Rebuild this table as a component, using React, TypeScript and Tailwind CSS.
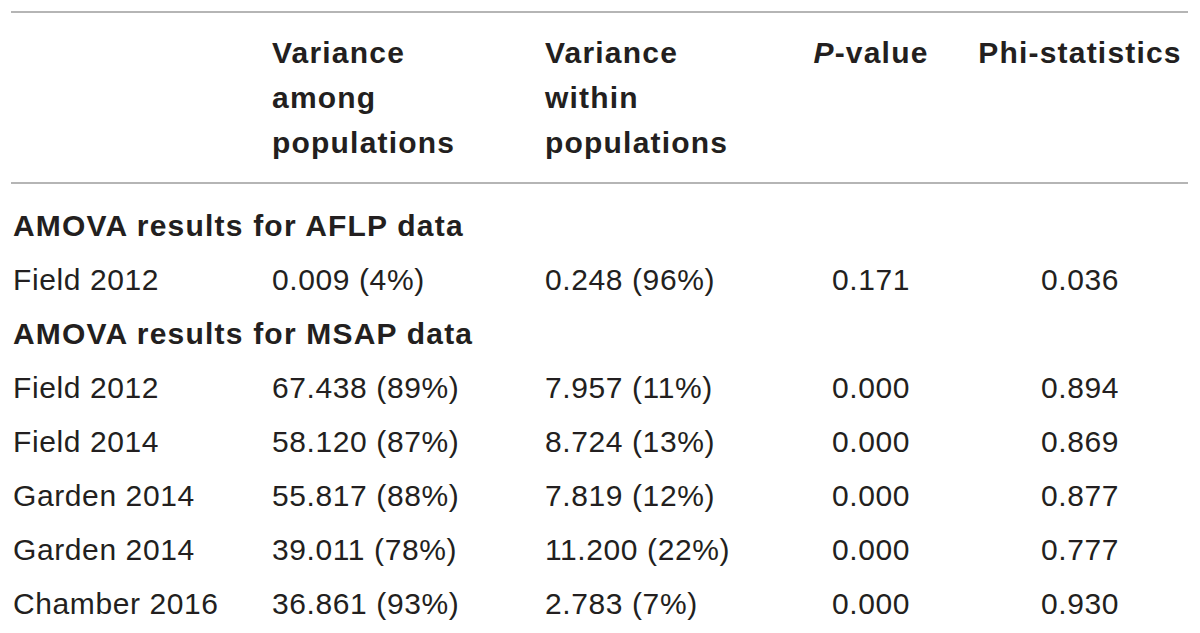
// AMOVA table — variance components for AFLP and MSAP data
const headCls = "pt-[17px] pb-[17px] align-top font-bold leading-[45px] tracking-[0.04em]";
const cellCls = "p-0 leading-[54px] whitespace-nowrap";

type Row = { label: string; among: string; within: string; p: string; phi: string };

const aflp: Row[] = [{ label: "Field 2012", among: "0.009 (4%)", within: "0.248 (96%)", p: "0.171", phi: "0.036" }];

const msap: Row[] = [
  { label: "Field 2012", among: "67.438 (89%)", within: "7.957 (11%)", p: "0.000", phi: "0.894" },
  { label: "Field 2014", among: "58.120 (87%)", within: "8.724 (13%)", p: "0.000", phi: "0.869" },
  { label: "Garden 2014", among: "55.817 (88%)", within: "7.819 (12%)", p: "0.000", phi: "0.877" },
  { label: "Garden 2014", among: "39.011 (78%)", within: "11.200 (22%)", p: "0.000", phi: "0.777" },
  { label: "Chamber 2016", among: "36.861 (93%)", within: "2.783 (7%)", p: "0.000", phi: "0.930" },
];

function Section({ title, rows, first }: { title: string; rows: Row[]; first?: boolean }) {
  return (
    <>
      <tr>
        <td colSpan={5} className={`${cellCls} pl-[2px] font-bold tracking-[0.04em] ${first ? "pt-[15px]" : ""}`}>
          {title}
        </td>
      </tr>
      {rows.map((r, i) => (
        <tr key={i}>
          <td className={`${cellCls} pl-[2px]`}>{r.label}</td>
          <td className={cellCls}>{r.among}</td>
          <td className={cellCls}>{r.within}</td>
          <td className={`${cellCls} text-center`}>{r.p}</td>
          <td className={`${cellCls} text-center`}>{r.phi}</td>
        </tr>
      ))}
    </>
  );
}

export default function App() {
  return (
    <div className="min-h-screen bg-white pt-[11px] pl-[11px] text-[#231f20] [font-family:'Liberation_Sans',Arial,sans-serif]">
      <table className="w-[1177px] table-fixed border-collapse border-t-2 border-[#b5b5b5] text-[30px] tracking-[0.02em]">
        <colgroup>
          <col className="w-[261px]" />
          <col className="w-[273px]" />
          <col className="w-[225px]" />
          <col className="w-[202px]" />
          <col className="w-[216px]" />
        </colgroup>
        <thead>
          <tr className="border-b-2 border-[#b5b5b5]">
            <th className={`${headCls} text-left`} />
            <th className={`${headCls} text-left`}>
              Variance
              <br />
              among
              <br />
              populations
            </th>
            <th className={`${headCls} text-left`}>
              Variance
              <br />
              within
              <br />
              populations
            </th>
            <th className={`${headCls} text-center`}>
              <i>P</i>-value
            </th>
            <th className={`${headCls} text-center`}>Phi-statistics</th>
          </tr>
        </thead>
        <tbody>
          <Section title="AMOVA results for AFLP data" rows={aflp} first />
          <Section title="AMOVA results for MSAP data" rows={msap} />
        </tbody>
      </table>
    </div>
  );
}
